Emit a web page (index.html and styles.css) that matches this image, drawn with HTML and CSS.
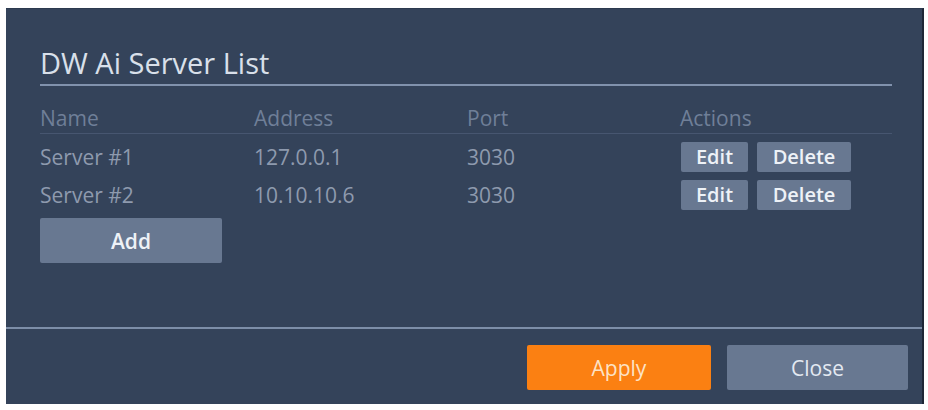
FILE: index.html
```html
<!DOCTYPE html>
<html lang="en">
<head>
<meta charset="utf-8">
<title>DW Ai Server List</title>
<link rel="stylesheet" href="styles.css">
</head>
<body>
<div class="dialog">
  <div class="content">
    <h1 class="title">DW Ai Server List</h1>
    <div class="table">
      <div class="row head">
        <div class="cell">Name</div>
        <div class="cell">Address</div>
        <div class="cell">Port</div>
        <div class="cell">Actions</div>
      </div>
      <div class="row first">
        <div class="cell">Server #1</div>
        <div class="cell">127.0.0.1</div>
        <div class="cell">3030</div>
        <div class="cell actions"><button class="btn small edit">Edit</button><button class="btn small del">Delete</button></div>
      </div>
      <div class="row">
        <div class="cell">Server #2</div>
        <div class="cell">10.10.10.6</div>
        <div class="cell">3030</div>
        <div class="cell actions"><button class="btn small edit">Edit</button><button class="btn small del">Delete</button></div>
      </div>
    </div>
    <button class="btn add">Add</button>
  </div>
  <div class="footer">
    <button class="btn big apply">Apply</button>
    <button class="btn big close">Close</button>
  </div>
</div>
</body>
</html>
```

FILE: styles.css
```css
html, body {
  margin: 0;
  padding: 0;
  background: #ffffff;
}
body {
  padding: 8px 4px 6px 6px;
  font-family: "Open Sans", "Noto Sans", sans-serif;
}
.dialog {
  box-sizing: border-box;
  width: 918px;
  height: 396px;
  background: #34435a;
  border-right: 2px solid #1e2736;
  border-top: 1px solid #2c3a4f;
  display: flex;
  flex-direction: column;
}
.content {
  flex: 1;
  padding: 0 30px 0 34px;
  display: flex;
  flex-direction: column;
  align-items: flex-start;
}
.title {
  align-self: stretch;
  margin: 34px 0 0 0;
  font-size: 29px;
  letter-spacing: 0;
  font-weight: 400;
  line-height: 40px;
  color: #d9e0ea;
  border-bottom: 2px solid #8192ad;
  padding-bottom: 1px;
}
.table {
  align-self: stretch;
  margin-top: 17px;
}
.row {
  display: grid;
  grid-template-columns: 214px 213px 213px 1fr;
  height: 38px;
  align-items: center;
  font-size: 21px;
  color: #8e9aae;
}
.row.head {
  height: 30px;
  color: #6f7f98;
  border-bottom: 1px solid #475670;
}
.row.first {
  margin-top: 4px;
}
.actions {
  display: flex;
  gap: 9px;
  padding-left: 1px;
}
.btn {
  font-family: "Open Sans", "Noto Sans", sans-serif;
  border: none;
  border-radius: 2px;
  background: #687891;
  color: #eef2f7;
  padding: 0;
  margin: 0;
}
.small {
  height: 30px;
  font-size: 20px;
  font-weight: 600;
  line-height: 30px;
}
.edit { width: 67px; }
.del { width: 94px; }
.add {
  width: 182px;
  height: 45px;
  margin-top: 4px;
  font-size: 21px;
  font-weight: 600;
}
.footer {
  height: 77px;
  border-top: 2px solid #7d8ea8;
  display: flex;
  justify-content: flex-end;
  gap: 16px;
  padding: 16px 14px 0 0;
  box-sizing: border-box;
}
.big {
  height: 45px;
  font-size: 21px;
  font-weight: 500;
}
.apply {
  width: 184px;
  background: #fb8012;
  color: #fde3c6;
}
.close {
  width: 181px;
  background: #687891;
  color: #e3e9f1;
}
```
